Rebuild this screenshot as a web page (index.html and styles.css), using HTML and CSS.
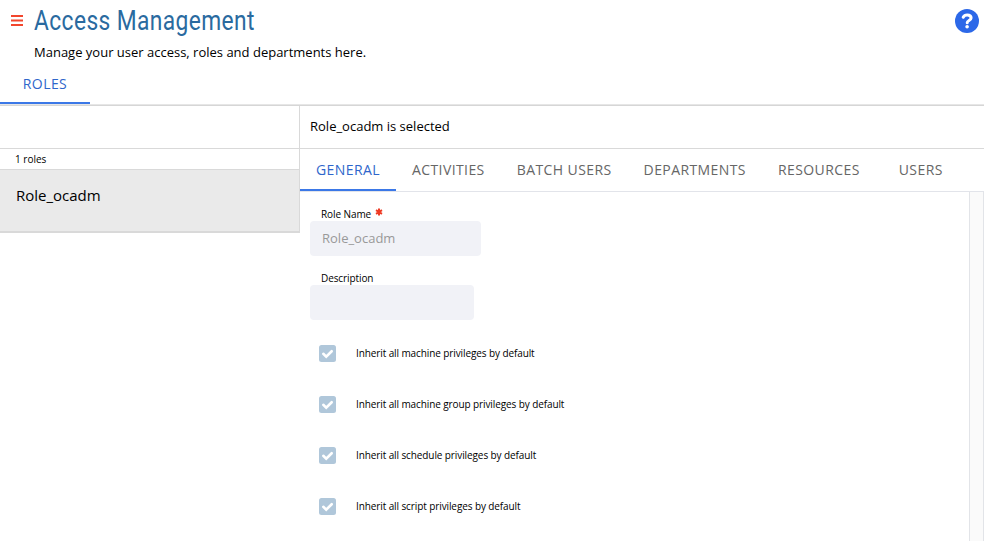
FILE: index.html
```html
<!DOCTYPE html>
<html lang="en">
<head>
<meta charset="utf-8">
<title>Access Management</title>
<link rel="stylesheet" href="styles.css">
</head>
<body>
<header class="top">
  <svg class="menu" width="12" height="12" viewBox="0 0 12 12"><path d="M0 1h12M0 5.500h12M0 10h12" stroke="#f2462d" stroke-width="2"/></svg>
  <div class="heading">
    <h1>Access Management</h1>
    <p>Manage your user access, roles and departments here.</p>
  </div>
  <svg class="help" width="24" height="24" viewBox="0 0 24 24"><circle cx="12" cy="12" r="12" fill="#2c68e8"/><path d="M8.200 8.200C9 6.700 10.300 6 12.200 6c2.200 0 3.900 1.100 3.900 3 0 2.500-3.900 2.500-3.900 4.700" fill="none" stroke="#fff" stroke-width="3" stroke-linecap="round"/><circle cx="12.100" cy="17.800" r="1.800" fill="#fff"/></svg>
</header>
<nav class="main-tabs"><a class="tab active">ROLES</a></nav>
<main class="content">
  <aside class="side">
    <div class="search"></div>
    <div class="count">1 roles</div>
    <div class="role">Role_ocadm</div>
  </aside>
  <section class="detail">
    <div class="selected"><span>Role_ocadm is selected</span></div>
    <nav class="tabs">
      <a class="tab active">GENERAL</a><a class="tab">ACTIVITIES</a><a class="tab">BATCH USERS</a><a class="tab">DEPARTMENTS</a><a class="tab">RESOURCES</a><a class="tab">USERS</a>
    </nav>
    <div class="pane">
      <form class="form">
        <label class="label">Role Name <svg class="star" width="8" height="8" viewBox="0 0 8 8"><path d="M4 .5v7M1 2.200l6 3.600M7 2.200L1 5.800" stroke="#ee3a24" stroke-width="2"/></svg></label>
        <div class="field wide">Role_ocadm</div>
        <label class="label desc">Description</label>
        <div class="field"></div>
        <div class="checks">
          <div class="check"><svg width="17" height="17" viewBox="0 0 17 17"><rect width="17" height="17" rx="2.500" fill="#b0c7da"/><path d="M4.300 8.800l2.900 2.800 5.500-5.400" fill="none" stroke="#fff" stroke-width="2.600" stroke-linecap="round"/></svg><span>Inherit all machine privileges by default</span></div>
          <div class="check"><svg width="17" height="17" viewBox="0 0 17 17"><rect width="17" height="17" rx="2.500" fill="#b0c7da"/><path d="M4.300 8.800l2.900 2.800 5.500-5.400" fill="none" stroke="#fff" stroke-width="2.600" stroke-linecap="round"/></svg><span>Inherit all machine group privileges by default</span></div>
          <div class="check"><svg width="17" height="17" viewBox="0 0 17 17"><rect width="17" height="17" rx="2.500" fill="#b0c7da"/><path d="M4.300 8.800l2.900 2.800 5.500-5.400" fill="none" stroke="#fff" stroke-width="2.600" stroke-linecap="round"/></svg><span>Inherit all schedule privileges by default</span></div>
          <div class="check"><svg width="17" height="17" viewBox="0 0 17 17"><rect width="17" height="17" rx="2.500" fill="#b0c7da"/><path d="M4.300 8.800l2.900 2.800 5.500-5.400" fill="none" stroke="#fff" stroke-width="2.600" stroke-linecap="round"/></svg><span>Inherit all script privileges by default</span></div>
        </div>
      </form>
      <div class="track"></div>
    </div>
  </section>
</main>
</body>
</html>
```
FILE: styles.css
```css
* { box-sizing: border-box; }
body { margin: 0; height: 541px; overflow: hidden; background: #fff; color: #000; font-family: "Open Sans", sans-serif; font-size: 13px; display: flex; flex-direction: column; white-space: nowrap; }
svg { display: block; flex: none; }
.top { height: 64px; flex: none; display: flex; align-items: flex-start; padding: 0 5px 0 11px; }
.menu { margin-top: 15px; }
.heading { margin-left: 11px; flex: 1; }
h1 { margin: 0; height: 42px; line-height: 42px; font-family: Roboto, sans-serif; font-weight: 400; font-size: 28px; letter-spacing: .5px; color: #2a6a9f; transform: scaleX(.813); transform-origin: left; }
p { margin: 0; line-height: 20px; }
.help { margin-top: 9px; }
.main-tabs { height: 42px; flex: none; display: flex; border-bottom: 1px solid #d6d6d6; box-shadow: inset 0 -1px #e6e6e6; }
.tab { display: flex; align-items: center; justify-content: center; min-width: 90px; padding: 0 16px; font-size: 14px; letter-spacing: .41px; color: #666; }
.tab.active { color: #2f66cb; border-bottom: 2px solid #3b78e7; }
.main-tabs .tab { height: 40px; }
.content { flex: 1; display: flex; min-height: 0; }
.side { width: 300px; height: 127px; flex: none; border-right: 1px solid #d9d9d9; }
.search { height: 43px; border-bottom: 1px solid #d9d9d9; }
.count { height: 21px; line-height: 20px; padding-left: 15px; font-size: 10px; border-bottom: 1px solid #d9d9d9; }
.role { height: 63px; padding-left: 16px; line-height: 51px; font-size: 15px; background: #eaeaea; border-bottom: 2px solid #d9d9d9; }
.detail { flex: 1; display: flex; flex-direction: column; }
.selected { height: 43px; flex: none; line-height: 41px; padding-left: 10px; border-bottom: 1px solid #d9d9d9; }
.tabs { height: 43px; flex: none; display: flex; border-bottom: 1px solid #e2e4ea; }
.tabs .tab { padding-bottom: 2px; }
.tabs .tab.active { padding-bottom: 0; }
.pane { flex: 1; display: flex; min-height: 0; }
.form { flex: 1; padding: 13px 0 0 10px; }
.track { width: 15px; background: #fafafa; border: solid #e2e4e8; border-width: 0 1px; }
.label { display: flex; height: 16px; margin-left: 11px; line-height: 19px; font-size: 10px; letter-spacing: -.09px; }
.star { margin: 3px 0 0 4px; }
.desc { margin-top: 13px; }
.field { width: 164px; height: 35px; border-radius: 4px; background: #f1f2f7; color: #999; line-height: 34px; padding-left: 12px; }
.field.wide { width: 171px; }
.checks { display: grid; gap: 34px; margin: 25px 0 0 9px; }
.check { display: flex; align-items: center; gap: 20px; height: 17px; font-size: 10px; letter-spacing: -.1px; }
.check span { line-height: 15px; }
```
